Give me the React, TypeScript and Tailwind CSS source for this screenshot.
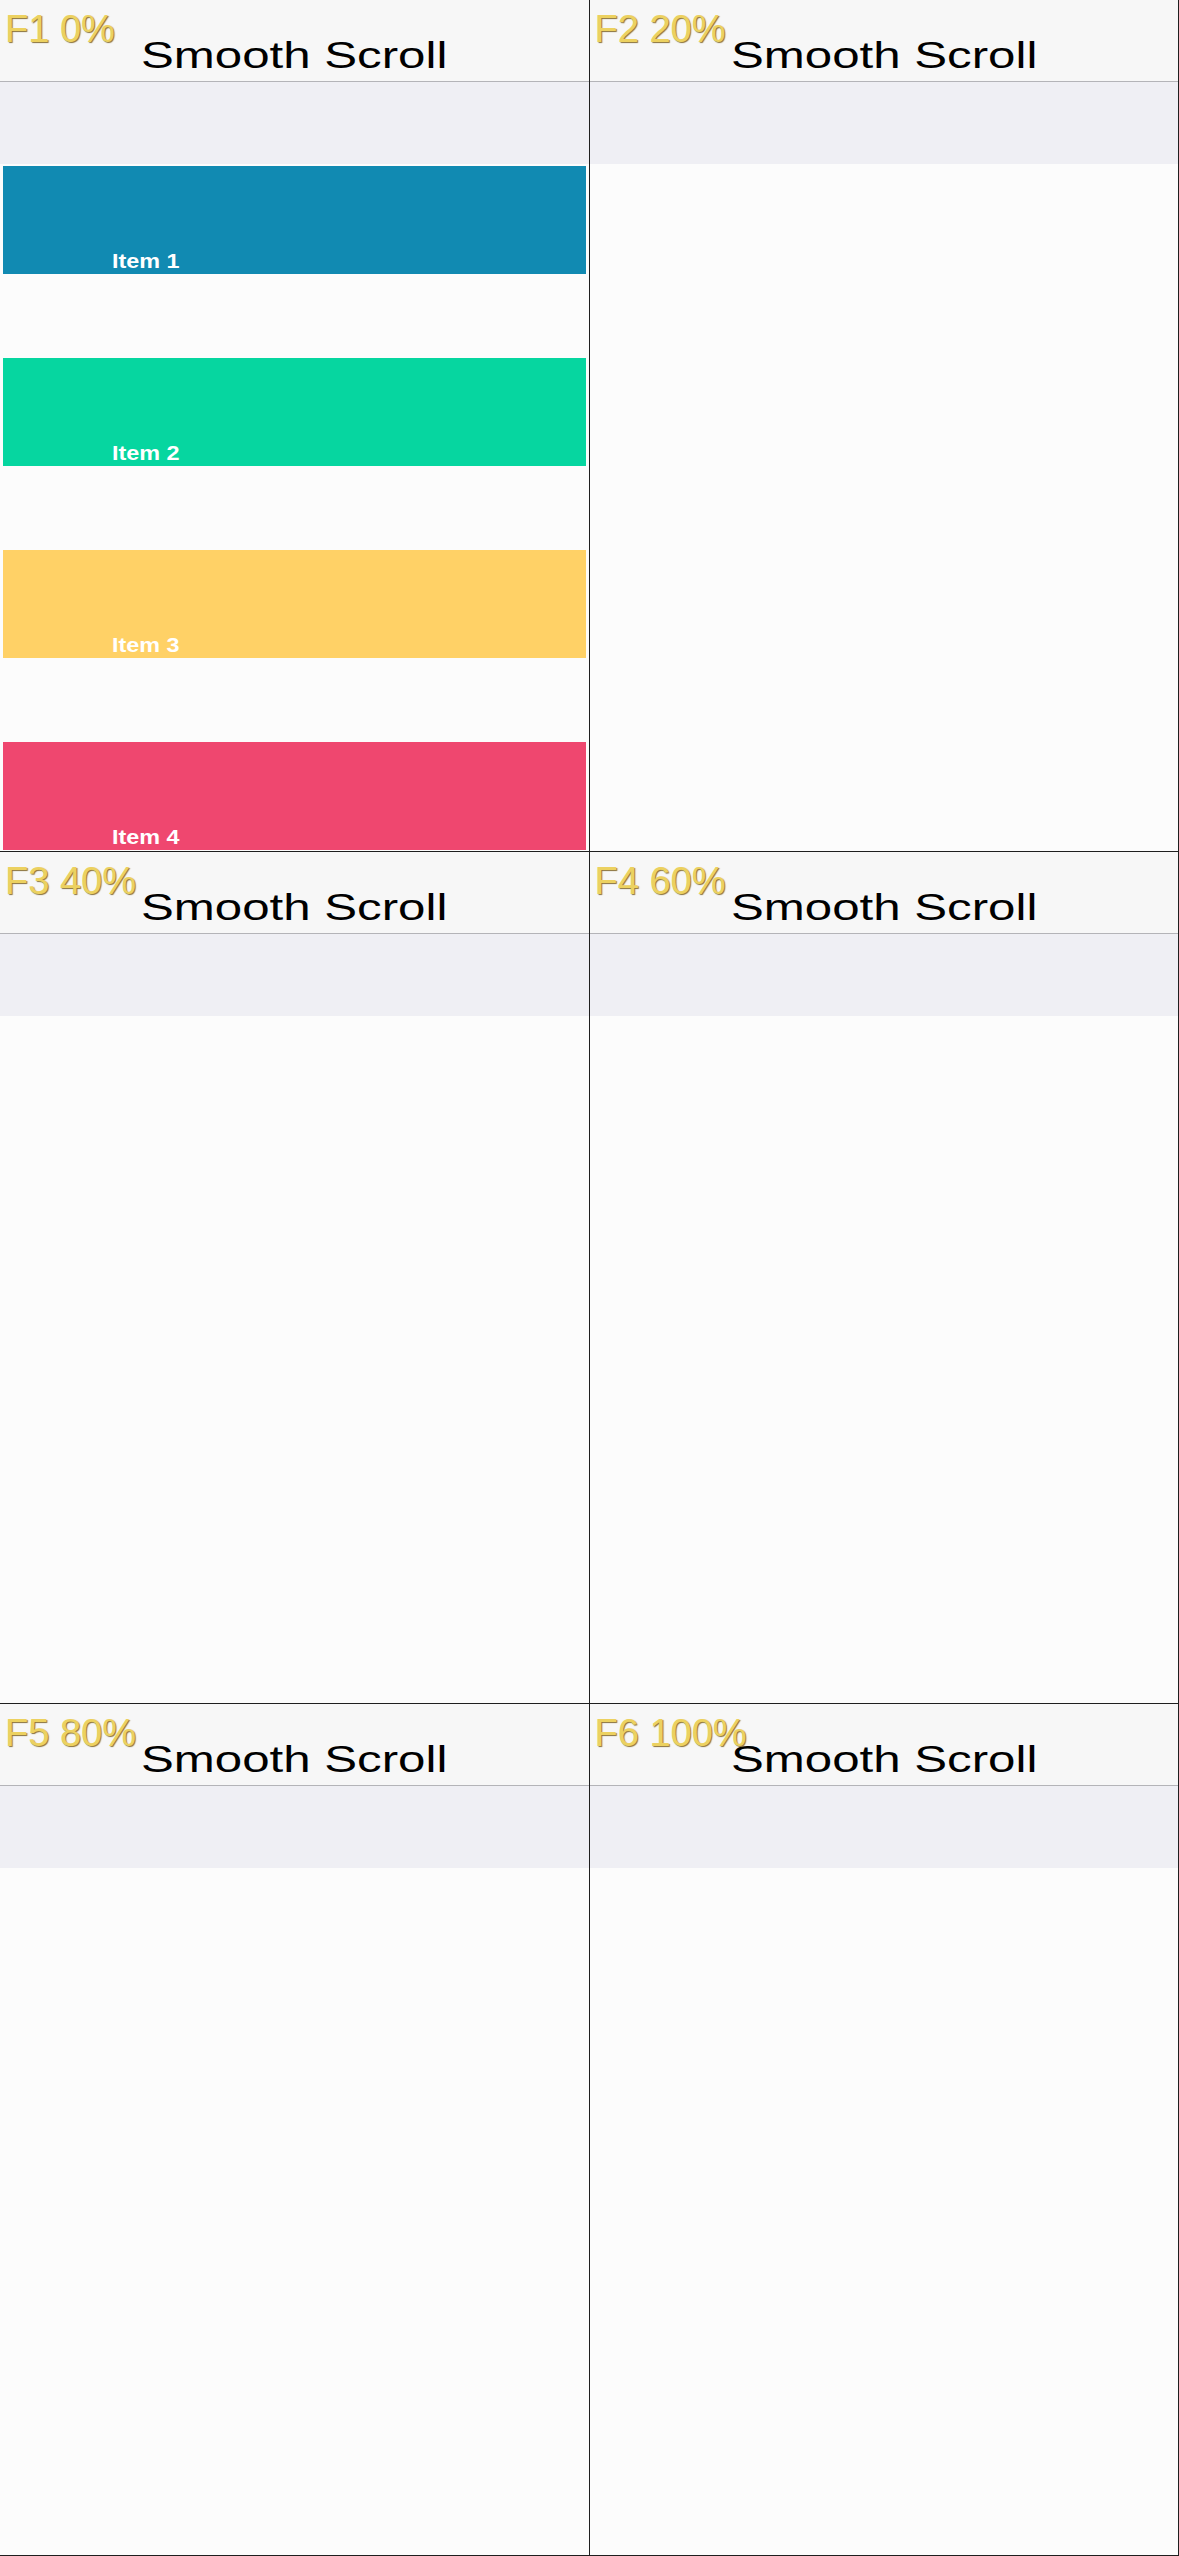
import React from "react";

type Frame = { id: string; progress: string; showItems: boolean };

const frames: Frame[] = [
  { id: "F1", progress: "0%", showItems: true },
  { id: "F2", progress: "20%", showItems: false },
  { id: "F3", progress: "40%", showItems: false },
  { id: "F4", progress: "60%", showItems: false },
  { id: "F5", progress: "80%", showItems: false },
  { id: "F6", progress: "100%", showItems: false },
];

const items = [
  { label: "Item 1", color: "bg-[#118ab2]" },
  { label: "Item 2", color: "bg-[#06d6a0]" },
  { label: "Item 3", color: "bg-[#ffd166]" },
  { label: "Item 4", color: "bg-[#ef476f]" },
];

function ListItems() {
  return (
    <ul className="flex flex-col gap-[84px] px-[3px] pt-[2px]">
      {items.map((it) => (
        <li
          key={it.label}
          className={`flex h-[108px] items-end pb-[3px] pl-[109px] ${it.color}`}
        >
          <span className="inline-block origin-left scale-x-[1.17] font-['Liberation_Sans',Arial,sans-serif] text-[20px] font-bold leading-none text-white">
            {it.label}
          </span>
        </li>
      ))}
    </ul>
  );
}

function FrameCell({ frame }: { frame: Frame }) {
  return (
    <div className="relative h-[852px] overflow-hidden border-r border-b border-[#1f1f1f] bg-[#fcfcfc]">
      <header className="h-[82px] border-b border-[#b4b4b8] bg-[#f7f7f7] pt-[37px] text-center">
        <h1 className="inline-block scale-x-[1.33] font-['Liberation_Sans',Arial,sans-serif] text-[37px] font-normal leading-none text-black">
          Smooth Scroll
        </h1>
      </header>
      <div className="h-[82px] bg-[#efeff4]" />
      {frame.showItems && <ListItems />}
      <span className="absolute left-[5px] top-[10px] font-['Liberation_Sans',Arial,sans-serif] text-[38px] leading-none text-[#ecd160] [text-shadow:1px_1px_1px_rgba(110,80,10,0.8)]">
        {frame.id} {frame.progress}
      </span>
    </div>
  );
}

export default function App() {
  return (
    <div className="grid w-[1179px] grid-cols-2 bg-[#fcfcfc]">
      {frames.map((f) => (
        <FrameCell key={f.id} frame={f} />
      ))}
    </div>
  );
}
